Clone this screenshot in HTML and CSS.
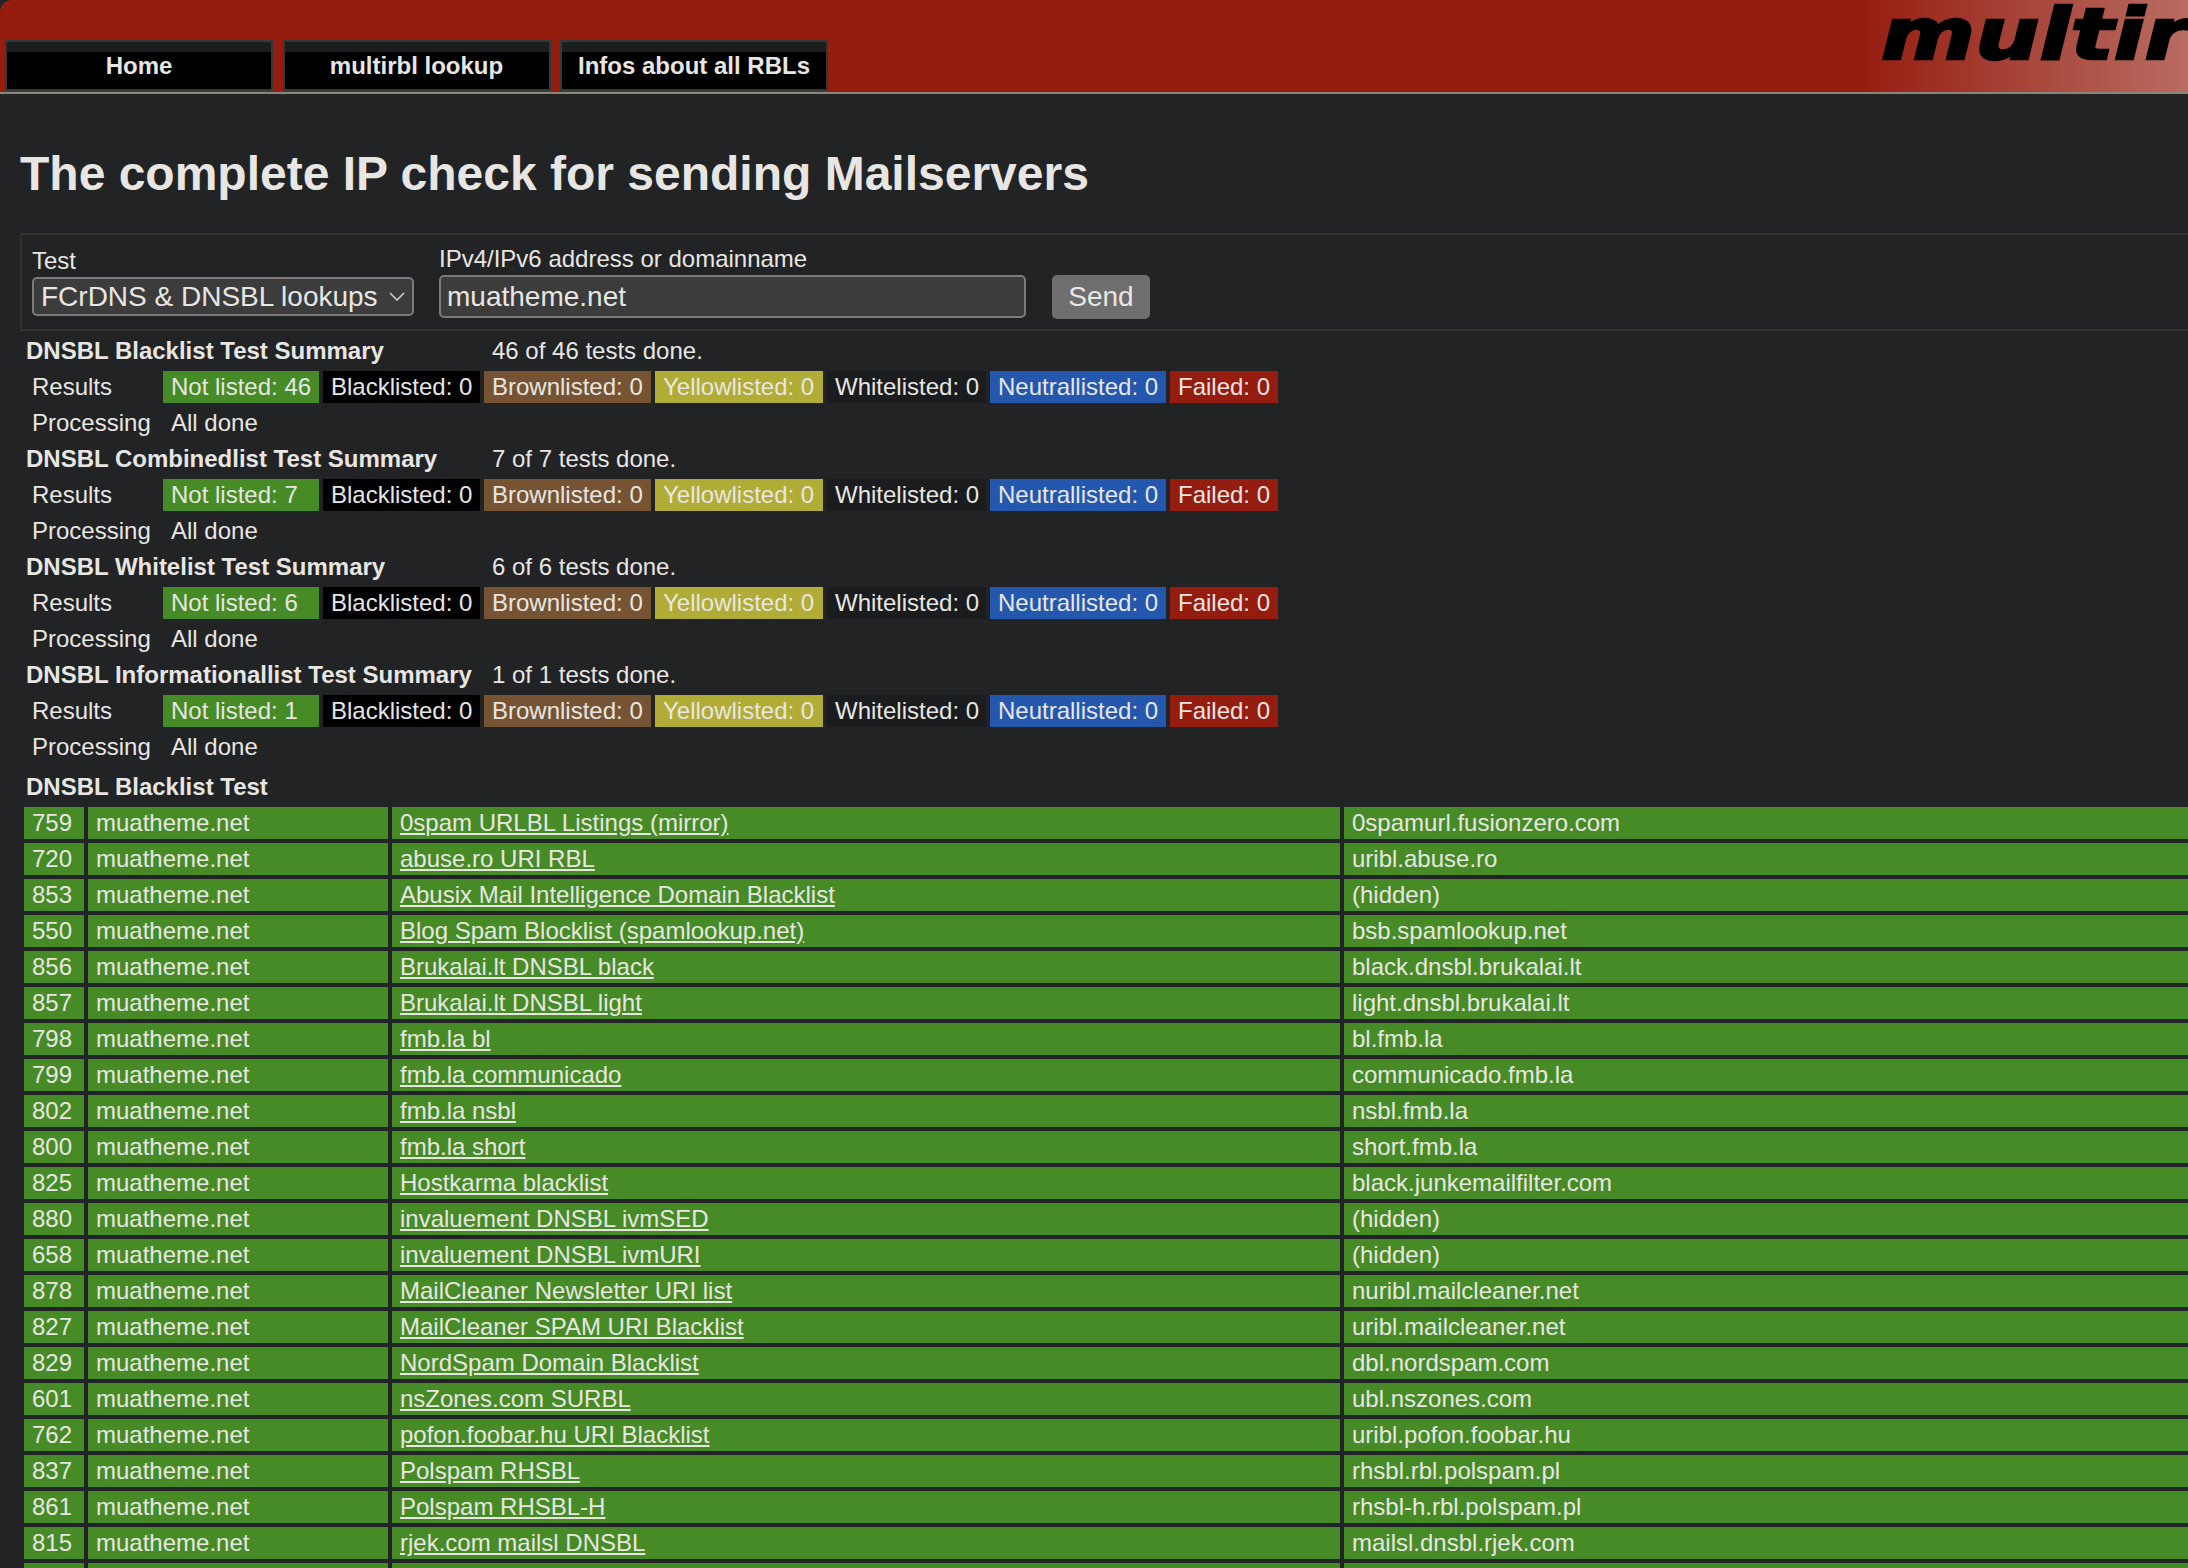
FILE: index.html
```html
<!DOCTYPE html>
<html lang="en">
<head>
    <meta charset="UTF-8">
    <title>multirbl.valli.org</title>
    <link rel="stylesheet" href="styles.css">
</head>
<body>
    <header class="topbar">
        <nav class="tabs">
            <a class="tab" href="#">Home</a>
            <a class="tab" href="#">multirbl lookup</a>
            <a class="tab" href="#">Infos about all RBLs</a>
        </nav>
        <div class="logo">multirbl</div>
    </header>

    <main class="content">
        <h1>The complete IP check for sending Mailservers</h1>

        <form class="lookup">
            <div class="field field-test">
                <label for="test">Test</label>
                <div class="select-wrap">
                    <select id="test"><option>FCrDNS &amp; DNSBL lookups</option></select>
                    <svg class="chevron" width="16" height="9" viewBox="0 0 16 9"><path d="M1 1l7 7 7-7" fill="none" stroke="#d0cec9" stroke-width="1.6"/></svg>
                </div>
            </div>
            <div class="field field-host">
                <label for="host">IPv4/IPv6 address or domainname</label>
                <input id="host" type="text" value="muatheme.net">
            </div>
            <button type="button">Send</button>
        </form>

        <table class="summary">
            <colgroup>
                <col class="c1"><col class="c2"><col class="c3"><col class="c4">
                <col class="c5"><col class="c6"><col class="c7"><col class="c8">
            </colgroup>
            <tbody>
                <tr><th colspan="3">DNSBL Blacklist Test Summary</th><td colspan="5">46 of 46 tests done.</td></tr>
                <tr><td>Results</td><td class="notlisted">Not listed: 46</td><td class="black">Blacklisted: 0</td><td class="brown">Brownlisted: 0</td><td class="yellow">Yellowlisted: 0</td><td class="white">Whitelisted: 0</td><td class="neutral">Neutrallisted: 0</td><td class="failed">Failed: 0</td></tr>
                <tr><td>Processing</td><td colspan="7">All done</td></tr>

                <tr><th colspan="3">DNSBL Combinedlist Test Summary</th><td colspan="5">7 of 7 tests done.</td></tr>
                <tr><td>Results</td><td class="notlisted">Not listed: 7</td><td class="black">Blacklisted: 0</td><td class="brown">Brownlisted: 0</td><td class="yellow">Yellowlisted: 0</td><td class="white">Whitelisted: 0</td><td class="neutral">Neutrallisted: 0</td><td class="failed">Failed: 0</td></tr>
                <tr><td>Processing</td><td colspan="7">All done</td></tr>

                <tr><th colspan="3">DNSBL Whitelist Test Summary</th><td colspan="5">6 of 6 tests done.</td></tr>
                <tr><td>Results</td><td class="notlisted">Not listed: 6</td><td class="black">Blacklisted: 0</td><td class="brown">Brownlisted: 0</td><td class="yellow">Yellowlisted: 0</td><td class="white">Whitelisted: 0</td><td class="neutral">Neutrallisted: 0</td><td class="failed">Failed: 0</td></tr>
                <tr><td>Processing</td><td colspan="7">All done</td></tr>

                <tr><th colspan="3">DNSBL Informationallist Test Summary</th><td colspan="5">1 of 1 tests done.</td></tr>
                <tr><td>Results</td><td class="notlisted">Not listed: 1</td><td class="black">Blacklisted: 0</td><td class="brown">Brownlisted: 0</td><td class="yellow">Yellowlisted: 0</td><td class="white">Whitelisted: 0</td><td class="neutral">Neutrallisted: 0</td><td class="failed">Failed: 0</td></tr>
                <tr><td>Processing</td><td colspan="7">All done</td></tr>
            </tbody>
        </table>

        <table class="results">
            <colgroup>
                <col class="r1"><col class="r2"><col class="r3"><col class="r4">
            </colgroup>
            <thead>
                <tr><th colspan="4">DNSBL Blacklist Test</th></tr>
            </thead>
            <tbody>
                <tr><td>759</td><td>muatheme.net</td><td><a href="#">0spam URLBL Listings (mirror)</a></td><td>0spamurl.fusionzero.com</td></tr>
                <tr><td>720</td><td>muatheme.net</td><td><a href="#">abuse.ro URI RBL</a></td><td>uribl.abuse.ro</td></tr>
                <tr><td>853</td><td>muatheme.net</td><td><a href="#">Abusix Mail Intelligence Domain Blacklist</a></td><td>(hidden)</td></tr>
                <tr><td>550</td><td>muatheme.net</td><td><a href="#">Blog Spam Blocklist (spamlookup.net)</a></td><td>bsb.spamlookup.net</td></tr>
                <tr><td>856</td><td>muatheme.net</td><td><a href="#">Brukalai.lt DNSBL black</a></td><td>black.dnsbl.brukalai.lt</td></tr>
                <tr><td>857</td><td>muatheme.net</td><td><a href="#">Brukalai.lt DNSBL light</a></td><td>light.dnsbl.brukalai.lt</td></tr>
                <tr><td>798</td><td>muatheme.net</td><td><a href="#">fmb.la bl</a></td><td>bl.fmb.la</td></tr>
                <tr><td>799</td><td>muatheme.net</td><td><a href="#">fmb.la communicado</a></td><td>communicado.fmb.la</td></tr>
                <tr><td>802</td><td>muatheme.net</td><td><a href="#">fmb.la nsbl</a></td><td>nsbl.fmb.la</td></tr>
                <tr><td>800</td><td>muatheme.net</td><td><a href="#">fmb.la short</a></td><td>short.fmb.la</td></tr>
                <tr><td>825</td><td>muatheme.net</td><td><a href="#">Hostkarma blacklist</a></td><td>black.junkemailfilter.com</td></tr>
                <tr><td>880</td><td>muatheme.net</td><td><a href="#">invaluement DNSBL ivmSED</a></td><td>(hidden)</td></tr>
                <tr><td>658</td><td>muatheme.net</td><td><a href="#">invaluement DNSBL ivmURI</a></td><td>(hidden)</td></tr>
                <tr><td>878</td><td>muatheme.net</td><td><a href="#">MailCleaner Newsletter URI list</a></td><td>nuribl.mailcleaner.net</td></tr>
                <tr><td>827</td><td>muatheme.net</td><td><a href="#">MailCleaner SPAM URI Blacklist</a></td><td>uribl.mailcleaner.net</td></tr>
                <tr><td>829</td><td>muatheme.net</td><td><a href="#">NordSpam Domain Blacklist</a></td><td>dbl.nordspam.com</td></tr>
                <tr><td>601</td><td>muatheme.net</td><td><a href="#">nsZones.com SURBL</a></td><td>ubl.nszones.com</td></tr>
                <tr><td>762</td><td>muatheme.net</td><td><a href="#">pofon.foobar.hu URI Blacklist</a></td><td>uribl.pofon.foobar.hu</td></tr>
                <tr><td>837</td><td>muatheme.net</td><td><a href="#">Polspam RHSBL</a></td><td>rhsbl.rbl.polspam.pl</td></tr>
                <tr><td>861</td><td>muatheme.net</td><td><a href="#">Polspam RHSBL-H</a></td><td>rhsbl-h.rbl.polspam.pl</td></tr>
                <tr><td>815</td><td>muatheme.net</td><td><a href="#">rjek.com mailsl DNSBL</a></td><td>mailsl.dnsbl.rjek.com</td></tr>
                <tr><td></td><td></td><td></td><td></td></tr>
            </tbody>
        </table>
    </main>
</body>
</html>
```

FILE: styles.css
```css
:root {
    --bg: #212325;
    --text: #e8e6e3;
    --red: #951d10;
    --green: #478b26;
}

html, body {
    height: 100%;
    overflow: hidden;
}

html {
    background: var(--bg);
}

body {
    margin: 0;
    width: 2400px;
    color: var(--text);
    font-family: "Liberation Sans", Arial, sans-serif;
    font-size: 24px;
}

/* top bar */
.topbar {
    display: flex;
    height: 92px;
    background: linear-gradient(to right, var(--red) 1860px, #b96c62 2188px);
    border-bottom: 2px solid #8b8577;
    border-top-left-radius: 12px;
    overflow: hidden;
}

.tabs {
    display: flex;
    align-items: flex-start;
    gap: 9.5px;
    margin: 40px 0 0 5px;
}

.tab {
    box-sizing: border-box;
    width: 268px;
    height: 51px;
    line-height: 48px;
    border: 2px solid #33383b;
    background: linear-gradient(to bottom, #1b1d1f 10px, #000 10px);
    color: var(--text);
    font-weight: bold;
    text-align: center;
    text-decoration: none;
}

.logo {
    margin-left: 1053px;
    color: #000;
    font-family: "DejaVu Sans", sans-serif;
    font-size: 72px;
    font-style: italic;
    font-weight: bold;
    line-height: 69px;
    -webkit-text-stroke: 2.5px #000;
    transform: scaleX(1.255);
    transform-origin: left top;
}

/* page */
.content {
    padding-left: 20px;
}

h1 {
    margin: 0;
    padding-top: 53px;
    height: 86px;
    font-size: 48px;
    line-height: 53px;
}

.lookup {
    display: flex;
    align-items: flex-end;
    height: 98px;
    padding-left: 10px;
    padding-bottom: 10px;
    box-sizing: border-box;
    border: 2px solid #34312b;
    border-right: none;
}

.field {
    display: flex;
    flex-direction: column;
}

.field-test {
    width: 382px;
    margin-right: 25px;
    margin-bottom: 3px;
}

.field-host {
    width: 587px;
    margin-right: 26px;
    margin-bottom: 1px;
}

label {
    line-height: 28px;
    margin-bottom: 2px;
}

.select-wrap {
    position: relative;
    display: flex;
}

.chevron {
    position: absolute;
    top: 15px;
    right: 9px;
    pointer-events: none;
}

select, input {
    box-sizing: border-box;
    width: 100%;
    color: var(--text);
    background-color: #3c3c3c;
    border: 2px solid #7b7b7b;
    border-radius: 5px;
    font-family: inherit;
    font-size: 28px;
}

select {
    appearance: none;
    height: 39px;
    padding: 0 7px;
}

input {
    height: 43px;
    padding: 0 6px;
}

button {
    width: 98px;
    height: 44px;
    border: none;
    border-radius: 5px;
    background: #6e6e6e;
    color: var(--text);
    font-family: inherit;
    font-size: 28px;
}

/* tables */
table {
    border-spacing: 4px;
    table-layout: fixed;
}

td, th {
    height: 32px;
    padding: 0 8px;
    line-height: 32px;
    white-space: nowrap;
    text-align: left;
}

th {
    padding-left: 2px;
    font-weight: bold;
}

.summary {
    width: 1262px;
}

.c1 { width: 135px; }
.c2 { width: 156px; }
.c3 { width: 157px; }
.c4 { width: 167px; }
.c5 { width: 168px; }
.c6 { width: 159px; }
.c7 { width: 176px; }
.c8 { width: 108px; }

.notlisted { background: var(--green); }
.black { background: #000; }
.brown { background: #765433; }
.yellow { background: #b0ac35; }
.white { background: #1a1c1e; }
.neutral { background: #2358ae; }
.failed { background: var(--red); }

.results {
    width: 2300px;
}

.r1 { width: 60px; }
.r2 { width: 300px; }
.r3 { width: 948px; }

.results tbody td {
    background: var(--green);
}

.results a {
    color: var(--text);
}
```
